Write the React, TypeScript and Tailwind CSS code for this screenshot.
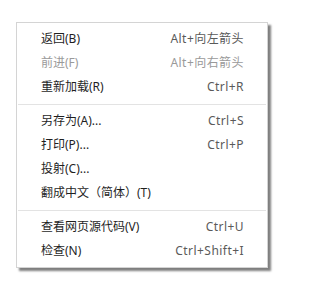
import React from "react";

type Item = { label: string; shortcut?: string; disabled?: boolean } | "sep";

const items: Item[] = [
  { label: "返回(B)", shortcut: "Alt+向左箭头" },
  { label: "前进(F)", shortcut: "Alt+向右箭头", disabled: true },
  { label: "重新加载(R)", shortcut: "Ctrl+R" },
  "sep",
  { label: "另存为(A)...", shortcut: "Ctrl+S" },
  { label: "打印(P)...", shortcut: "Ctrl+P" },
  { label: "投射(C)..." },
  { label: "翻成中文（简体）(T)" },
  "sep",
  { label: "查看网页源代码(V)", shortcut: "Ctrl+U" },
  { label: "检查(N)", shortcut: "Ctrl+Shift+I" },
];

export default function App() {
  return (
    <div
      className="w-[282px] h-[288px] bg-white pl-[16px] pt-[22px]"
      style={{ fontFamily: '"Noto Sans", "Noto Sans CJK SC", sans-serif' }}
    >
      <div className="w-[252px] h-[246px] bg-white border border-[#d4d4d4] shadow-[3px_3px_2px_rgba(0,0,0,0.5)] pt-[4px] pb-[4px] flex flex-col">
        {items.map((it, i) =>
          it === "sep" ? (
            <div key={i} className="h-[10px] flex items-center px-[1px]">
              <div className="h-px w-full bg-[#e3e3e3]" />
            </div>
          ) : (
            <div
              key={i}
              className={`h-[24px] flex items-center justify-between pl-[24px] pr-[23px] text-[12px] leading-none ${
                it.disabled ? "text-[#9a9a9a]" : "text-[#1f1f1f]"
              }`}
            >
              <span>{it.label}</span>
              {it.shortcut && (
                <span className={`tracking-[0.45px] ${it.disabled ? "text-[#9a9a9a]" : "text-[#5a5a5a]"}`}>
                  {it.shortcut}
                </span>
              )}
            </div>
          )
        )}
      </div>
    </div>
  );
}
